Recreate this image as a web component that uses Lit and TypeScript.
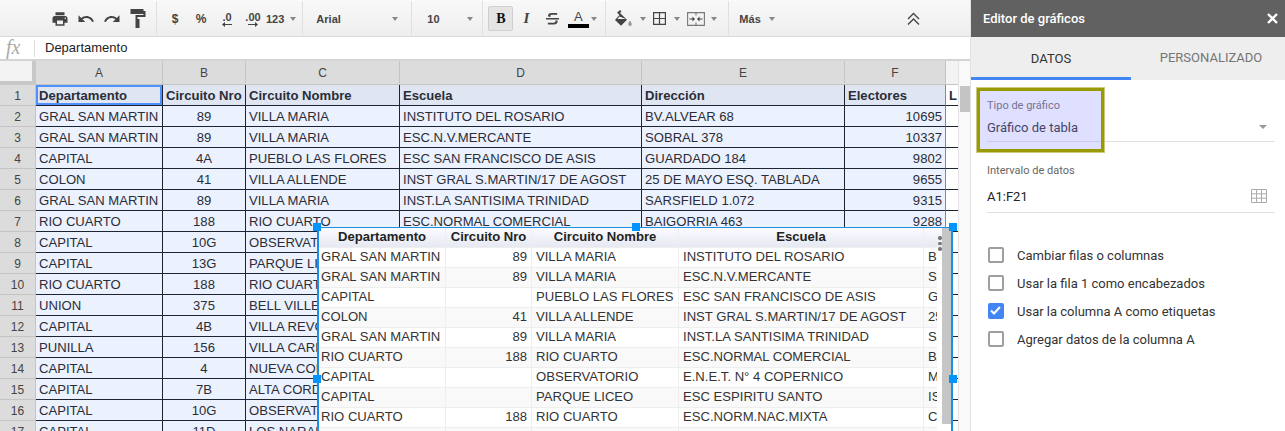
import { LitElement, html, css, svg } from "lit";
import { customElement } from "lit/decorators.js";

const sheetRows = [
  ["GRAL SAN MARTIN", "89", "VILLA MARIA", "INSTITUTO DEL ROSARIO", "BV.ALVEAR 68", "10695"],
  ["GRAL SAN MARTIN", "89", "VILLA MARIA", "ESC.N.V.MERCANTE", "SOBRAL 378", "10337"],
  ["CAPITAL", "4A", "PUEBLO LAS FLORES", "ESC SAN FRANCISCO DE ASIS", "GUARDADO 184", "9802"],
  ["COLON", "41", "VILLA ALLENDE", "INST GRAL S.MARTIN/17 DE AGOST", "25 DE MAYO ESQ. TABLADA", "9655"],
  ["GRAL SAN MARTIN", "89", "VILLA MARIA", "INST.LA SANTISIMA TRINIDAD", "SARSFIELD 1.072", "9315"],
  ["RIO CUARTO", "188", "RIO CUARTO", "ESC.NORMAL COMERCIAL", "BAIGORRIA 463", "9288"],
  ["CAPITAL", "10G", "OBSERVATORIO", "", "", ""],
  ["CAPITAL", "13G", "PARQUE LICEO", "", "", ""],
  ["RIO CUARTO", "188", "RIO CUARTO", "", "", ""],
  ["UNION", "375", "BELL VILLE", "", "", ""],
  ["CAPITAL", "4B", "VILLA REVOL", "", "", ""],
  ["PUNILLA", "156", "VILLA CARLOS", "", "", ""],
  ["CAPITAL", "4", "NUEVA CORDOBA", "", "", ""],
  ["CAPITAL", "7B", "ALTA CORDOBA", "", "", ""],
  ["CAPITAL", "10G", "OBSERVATORIO", "", "", ""],
  ["CAPITAL", "11D", "LOS NARANJOS", "", "", ""],
];

const chartRows = [
  ["GRAL SAN MARTIN", "89", "VILLA MARIA", "INSTITUTO DEL ROSARIO", "BV.ALVEAR 68"],
  ["GRAL SAN MARTIN", "89", "VILLA MARIA", "ESC.N.V.MERCANTE", "SOBRAL 378"],
  ["CAPITAL", "", "PUEBLO LAS FLORES", "ESC SAN FRANCISCO DE ASIS", "GUARDADO 184"],
  ["COLON", "41", "VILLA ALLENDE", "INST GRAL S.MARTIN/17 DE AGOST", "25 DE MAYO"],
  ["GRAL SAN MARTIN", "89", "VILLA MARIA", "INST.LA SANTISIMA TRINIDAD", "SARSFIELD"],
  ["RIO CUARTO", "188", "RIO CUARTO", "ESC.NORMAL COMERCIAL", "BAIGORRIA"],
  ["CAPITAL", "", "OBSERVATORIO", "E.N.E.T. N° 4 COPERNICO", "MITRE"],
  ["CAPITAL", "", "PARQUE LICEO", "ESC ESPIRITU SANTO", "ISLAS"],
  ["RIO CUARTO", "188", "RIO CUARTO", "ESC.NORM.NAC.MIXTA", "CABRERA"],
  ["", "", "", "", ""],
];

const icon = (w: number, h: number, body: unknown, box = "0 0 24 24") =>
  html`<svg width=${w} height=${h} viewBox=${box}>${body}</svg>`;

const caret = html`<span class="caret"></span>`;

const icons = {
  print: svg`<path fill="#444" d="M19 8H5c-1.66 0-3 1.34-3 3v6h4v4h12v-4h4v-6c0-1.66-1.34-3-3-3zm-3 11H8v-5h8v5zm3-7c-.55 0-1-.45-1-1s.45-1 1-1 1 .45 1 1-.45 1-1 1zm-1-9H6v4h12V3z"/>`,
  undo: svg`<path fill="#444" d="M12.5 8c-2.65 0-5.05.99-6.9 2.6L2 7v9h9l-3.62-3.62c1.39-1.16 3.16-1.88 5.12-1.88 3.54 0 6.55 2.31 7.6 5.5l2.37-.78C21.08 11.03 17.15 8 12.5 8z"/>`,
  redo: svg`<path fill="#444" d="M18.4 10.6C16.55 8.99 14.15 8 11.5 8c-4.65 0-8.58 3.03-9.96 7.22L3.9 16c1.05-3.19 4.05-5.5 7.6-5.5 1.95 0 3.73.72 5.12 1.88L13 16h9V7l-3.6 3.6z"/>`,
  roller: svg`<path fill="#444" d="M0 0h13v2h2v6H7v2h2v9H5V6h8V5H0z"/>`,
  fill: svg`<path fill="#444" d="M5 0l1.5 1.5L5 3l7 6.8-6 6L0 9.9 4.5 5 2 2.8zM4.5 6.5L2.4 9h8.4z"/><path fill="#999" d="M15 10.5c1 1.6 1.8 2.7 1.8 3.7a1.8 1.8 0 0 1-3.6 0c0-1 .8-2.1 1.8-3.7z"/>`,
  borders: svg`<path fill="none" stroke="#444" stroke-width="1.2" d="M.6.6h11.8v11.8H.6zM6.5.6v11.8M.6 6.5h11.8"/>`,
  merge: svg`<path fill="none" stroke="#777" stroke-width="1.1" d="M.6.6h16.8v12.8H.6zM9 .6v3M9 10.4v3"/><path fill="#444" d="M2.5 6.4h3V4.6L8 7 5.5 9.4V7.6h-3zM15.5 6.4h-3V4.6L10 7l2.500 2.400V7.600h3z"/>`,
  collapse: svg`<path fill="none" stroke="#444" stroke-width="1.4" d="M1 7l5.500-5.500L12 7M1 12.500L6.500 7l5.500 5.500"/>`,
  close: svg`<path stroke="#fff" stroke-width="2.400" d="M1 1l9 9M10 1l-9 9"/>`,
  grid: svg`<path fill="none" stroke="#aaa" d="M.5.5h15v13H.5zM5.500.5v13M10.500.5v13M.5 4.800h15M.5 9.200h15"/>`,
  check: svg`<path fill="none" stroke="#fff" stroke-width="2" d="M3 7.500l3 3 6-6.500"/>`,
  strike: svg`<path fill="#444" d="M3 1h9v2H6.200c-.9 0-1.400.5-1.400 1.200 0 .4.100.7.400 1H2.600C2.300 4.800 2.200 4.300 2.200 3.900 2.200 2.200 3.600 1 5.600 1zM0 6.500h14v1.500H0zM9.700 9.200h2.600c.1.400.2.700.2 1.100 0 2-1.700 3.200-3.900 3.200H2v-2h6.500c1.100 0 1.700-.5 1.700-1.300 0-.4-.2-.7-.5-1z"/>`,
};

@customElement("app-root")
export class AppRoot extends LitElement {
  static styles = css`
    :host {
      display: flex;
      position: relative;
      width: 1285px;
      height: 431px;
      overflow: hidden;
      background: #fff;
      font-family: "Liberation Sans", Arial, sans-serif;
      color: #222;
    }
    .sheet { width: 970px; flex: none; display: flex; flex-direction: column; position: relative; overflow: hidden; }

    .toolbar {
      flex: none; display: flex; align-items: center; padding-left: 47px;
      background: linear-gradient(#f8f8f8, #eeeeee); border-top: 1px solid #fafafa; border-bottom: 1px solid #dadada;
      box-sizing: content-box; height: 35px; color: #444; font-size: 11px; font-weight: bold;
    }
    .btn { width: 26px; height: 24px; flex: none; display: flex; align-items: center; justify-content: center; }
    .btn.wide { width: auto; gap: 6px; }
    .sep { width: 1px; height: 36px; background: #e0e0e0; flex: none; }
    .caret { width: 0; height: 0; flex: none; border: 3.500px solid transparent; border-top: 4px solid #888; border-bottom: 0; }
    .g2 { margin-left: 5px; margin-right: 5px; }
    .sel { display: flex; align-items: center; justify-content: space-between; height: 24px; flex: none; }
    .font { width: 82px; padding: 0 13px 0 13px; }
    .size { width: 46px; padding: 0 9px 0 15px; }
    .active { background: #e4e4e4; border: 1px solid #cfcfcf; border-radius: 2px; box-sizing: border-box; width: 25px; height: 25px; margin-left: 5px; font-size: 14px; font-family: "Liberation Serif", serif; color: #111; }
    .it { font-family: "Liberation Serif", serif; font-style: italic; font-size: 15px; color: #444; }
    .dec { flex-direction: column; font-size: 11px; line-height: 10px; padding-top: 2px; box-sizing: border-box; }
    .tcolor { flex-direction: column; font-size: 13px; font-weight: normal; line-height: 14px; width: 22px; margin: 0 2px 0 2px; color: #444; }
    .tcolor i { display: block; width: 21px; height: 4px; background: #000; }
    .m { display: flex; }

    .formula { height: 22px; flex: none; display: flex; align-items: center; border-bottom: 2px solid #d4d4d4; font-size: 13px; color: #222; }
    .fx { width: 35px; flex: none; box-sizing: border-box; padding-left: 6px; font: italic 20px "Liberation Serif", serif; color: #aaa; border-right: 1px solid #ddd; height: 17px; line-height: 15px; }
    .ftext { margin-left: 10px; padding-bottom: 2px; }

    .grid { display: grid; grid-template-columns: 36px 127px 83px 154px 242px 203px 101px 13px; font-size: 13.100px; }
    .colh { height: 24px; box-sizing: border-box; padding-top: 1px; background: #dcdcdc; border-right: 1px solid #c4c4c4; border-bottom: 1px solid #c4c4c4; display: flex; align-items: center; justify-content: center; font-size: 12px; color: #444; }
    .corner { background: #f3f3f3; border-right: 4px solid #c8c8c8; border-bottom: 4px solid #c8c8c8; }
    .blank { background: #f3f3f3; }
    .rowh { height: 21px; box-sizing: border-box; padding-top: 1px; background: #dcdcdc; border-right: 1px solid #c4c4c4; border-bottom: 1px solid #c4c4c4; display: flex; align-items: center; justify-content: center; font-size: 12px; color: #444; }
    .c { height: 21px; box-sizing: border-box; padding: 1px 3px 0; background: #ebf1fd; border-right: 1px solid #1d2433; border-bottom: 1px solid #1d2433; color: #2a2d38; line-height: 19px; white-space: nowrap; overflow: hidden; }
    .c.h { background: #dfe5f1; font-weight: bold; }
    .c.mid { text-align: center; }
    .c.end { border-right-color: #5a8ee8; }
    .c.num { text-align: right; }
    .c.a1 { box-shadow: inset 0 0 0 2px #4d90fe; }
    .c.g { background: #fff; border-right: 0; font-weight: bold; }

    .vbar { position: absolute; left: 958px; top: 61px; width: 12px; bottom: 0; background: #f9f9f9; border-left: 1px solid #e4e4e4; box-sizing: border-box; }
    .vbar i { display: block; width: 10px; height: 26px; margin: 25px 0 0 1px; background: #c4c4c4; }

    .chart { position: absolute; left: 317px; top: 227px; width: 636px; height: 210px; box-sizing: border-box; background: #fff; border: solid #1a8fe6; border-width: 1px 2px 0 2px; display: flex; font-size: 13.100px; color: #333; }
    .ctable { width: 618px; flex: none; overflow: hidden; display: grid; grid-template-columns: 127px 86px 147px 245px 13px; grid-auto-rows: 20px; align-content: start; }
    .cc { box-sizing: border-box; padding: 0 4px; border-right: 1px solid #eee; border-bottom: 1px solid #eee; line-height: 17px; white-space: nowrap; overflow: hidden; }
    .cc.first { padding-left: 2px; }
    .cc.r { text-align: right; }
    .cc.odd { background: #f9f9f9; }
    .cc.last { border-right: 0; padding-right: 0; }
    .cc.hd { background: linear-gradient(#fbfbff, #e6e9f2); font-weight: bold; text-align: center; color: #222; }
    .cfill { width: 5px; flex: none; height: 19px; background: linear-gradient(#fbfbff, #e6e9f2); }
    .cbar { width: 9px; height: 196px; background: #c6c6c6; flex: none; }
    .dots { position: absolute; left: 619px; top: 8px; display: flex; flex-direction: column; gap: 2px; }
    .dots i { display: block; width: 3.500px; height: 3.500px; border-radius: 50%; background: #777; }
    .handle { position: absolute; width: 8px; height: 8px; background: #0094ff; }

    .panel { flex: 1; border-left: 1px solid #e2e2e2; display: flex; flex-direction: column; font-family: Roboto, sans-serif; position: relative; }
    .phead { height: 37px; flex: none; background: #616161; color: #fff; font-size: 13px; font-weight: 500; display: flex; align-items: center; justify-content: space-between; padding: 0 7px 0 12px; }
    .tabs { height: 43px; flex: none; background: #eeeeee; display: flex; font-size: 13px; }
    .tab { display: flex; align-items: center; justify-content: center; box-sizing: border-box; }
    .tab.on { width: 160px; color: #333; border-bottom: 3px solid #4285f4; padding-top: 2px; }
    .tab.off { flex: 1; color: #757575; padding: 0 0 3px 6px; }
    .body { padding: 19px 10px 0 16px; }
    .flabel { font-size: 11px; color: #666; line-height: 13px; }
    .fval { display: flex; justify-content: space-between; align-items: center; font-size: 13px; color: #222; height: 22px; margin-top: 4px; padding-bottom: 3px; border-bottom: 1px solid #e0e0e0; }
    .f2 { margin-top: 22px; }
    .f2 .fval { margin-top: 8px; padding-bottom: 5px; }
    .pcaret { border-width: 4px; border-top-width: 4px; border-top-color: #999; margin-right: 8px; }
    .gridicon { display: flex; margin-right: 8px; }
    .checks { margin-top: 34px; display: flex; flex-direction: column; gap: 12px; }
    .chk { display: flex; align-items: center; height: 16px; font-size: 13px; color: #333; gap: 13px; padding-left: 1px; }
    .box { width: 16px; height: 16px; box-sizing: border-box; border: 2px solid #9e9e9e; border-radius: 2px; flex: none; display: flex; }
    .box.on { background: #4285f4; border: 0; }
    .hl { position: absolute; left: 5px; top: 87px; width: 129px; height: 66px; box-sizing: border-box; background: rgba(150, 150, 255, 0.3); border: 4px solid #999900; outline: 1px solid #c8c880; outline-offset: -1px; }
  `;

  private renderToolbar() {
    return html`<div class="toolbar">
      <div class="btn">${icon(18, 18, icons.print)}</div>
      <div class="btn">${icon(18, 18, icons.undo)}</div>
      <div class="btn">${icon(18, 18, icons.redo)}</div>
      <div class="btn">${icon(16, 19, icons.roller, "0 0 15 19")}</div>
      <div class="sep g2"></div>
      <div class="btn" style="font-size:12px">$</div>
      <div class="btn" style="font-size:12px">%</div>
      <div class="btn dec"><span>.0</span>${icon(10, 5, svg`<path fill="#444" d="M0 2.500L3 0v2h7v1H3v2z"/>`, "0 0 10 5")}</div>
      <div class="btn dec"><span>.00</span>${icon(10, 5, svg`<path fill="#444" d="M10 2.500L7 0v2H0v1h7v2z"/>`, "0 0 10 5")}</div>
      <div class="btn wide" style="margin-right:6px"><span>123</span>${caret}</div>
      <div class="sep"></div>
      <div class="sel font"><span>Arial</span>${caret}</div>
      <div class="sep"></div>
      <div class="sel size"><span>10</span>${caret}</div>
      <div class="sep"></div>
      <div class="btn active">B</div>
      <div class="btn it">I</div>
      <div class="btn">${icon(13, 13, icons.strike, "0 0 14 14")}</div>
      <div class="btn tcolor"><span>A</span><i></i></div>
      ${caret}
      <div class="sep" style="margin-left:8px"></div>
      <div class="btn" style="margin-left:5px">${icon(18, 18, icons.fill, "0 0 18 18")}</div>
      <span class="m" style="margin-left:3px">${caret}</span>
      <div class="btn">${icon(13, 13, icons.borders, "0 0 13 13")}</div>
      <span class="m" style="margin:0 3px 0 2px">${caret}</span>
      <div class="btn">${icon(18, 14, icons.merge, "0 0 18 14")}</div>
      <span class="m" style="margin-left:2px">${caret}</span>
      <div class="sep" style="margin-left:11px"></div>
      <div class="btn wide" style="margin-left:10px;gap:8px"><span>Más</span>${caret}</div>
      <div class="btn" style="margin-left:126px">${icon(13, 14, icons.collapse, "0 0 13 14")}</div>
    </div>`;
  }

  private renderGrid() {
    const head = ["Departamento", "Circuito Nro", "Circuito Nombre", "Escuela", "Dirección", "Electores"];
    const cls = (i: number) => (i === 1 ? "mid" : i === 5 ? "end num" : "");
    return html`<div class="grid">
      <div class="colh corner"></div>
      ${["A", "B", "C", "D", "E", "F"].map((l) => html`<div class="colh">${l}</div>`)}
      <div class="colh blank"></div>
      <div class="rowh">1</div>
      ${head.map((t, i) => html`<div class="c h ${i === 0 ? "a1" : i === 5 ? "end" : ""}">${t}</div>`)}
      <div class="c g">L</div>
      ${sheetRows.map(
        (r, n) => html`<div class="rowh">${n + 2}</div>
          ${r.map((t, i) => html`<div class="c ${cls(i)}">${t}</div>`)}
          <div class="c g"></div>`
      )}
    </div>`;
  }

  private renderChart() {
    const head = ["Departamento", "Circuito Nro", "Circuito Nombre", "Escuela", ""];
    return html`<div class="chart">
      <div class="ctable">
        ${head.map((t, i) => html`<div class="cc hd ${i === 4 ? "last" : ""}">${t}</div>`)}
        ${chartRows.map((r, n) =>
          r.map(
            (t, i) =>
              html`<div class="cc ${i === 0 ? "first" : ""} ${i === 1 ? "r" : ""} ${n % 2 ? "odd" : ""} ${i === 4 ? "last" : ""}">${t}</div>`
          )
        )}
      </div>
      <div class="cfill"></div>
      <div class="cbar"></div>
      <div class="dots"><i></i><i></i><i></i></div>
    </div>
    ${[
      [317, 227],
      [636, 227],
      [953, 227],
      [317, 379],
      [953, 379],
    ].map(([x, y]) => html`<div class="handle" style="left:${x - 4}px;top:${y - 4}px"></div>`)}`;
  }

  private renderPanel() {
    const checks = [
      ["Cambiar filas o columnas", false],
      ["Usar la fila 1 como encabezados", false],
      ["Usar la columna A como etiquetas", true],
      ["Agregar datos de la columna A", false],
    ];
    return html`<div class="panel">
      <div class="phead"><span>Editor de gráficos</span>${icon(11, 11, icons.close, "0 0 11 11")}</div>
      <div class="tabs">
        <div class="tab on">DATOS</div>
        <div class="tab off">PERSONALIZADO</div>
      </div>
      <div class="body">
        <div class="flabel">Tipo de gráfico</div>
        <div class="fval"><span>Gráfico de tabla</span><span class="caret pcaret"></span></div>
        <div class="f2">
          <div class="flabel">Intervalo de datos</div>
          <div class="fval"><span>A1:F21</span><span class="gridicon">${icon(16, 14, icons.grid, "0 0 16 14")}</span></div>
        </div>
        <div class="checks">
          ${checks.map(
            ([t, on]) => html`<div class="chk">
              <span class="box ${on ? "on" : ""}">${on ? icon(16, 16, icons.check, "0 0 16 16") : ""}</span>${t}
            </div>`
          )}
        </div>
      </div>
      <div class="hl"></div>
    </div>`;
  }

  render() {
    return html`<div class="sheet">
        ${this.renderToolbar()}
        <div class="formula"><div class="fx">fx</div><div class="ftext">Departamento</div></div>
        ${this.renderGrid()}
        <div class="vbar"><i></i></div>
        ${this.renderChart()}
      </div>
      ${this.renderPanel()}`;
  }
}
